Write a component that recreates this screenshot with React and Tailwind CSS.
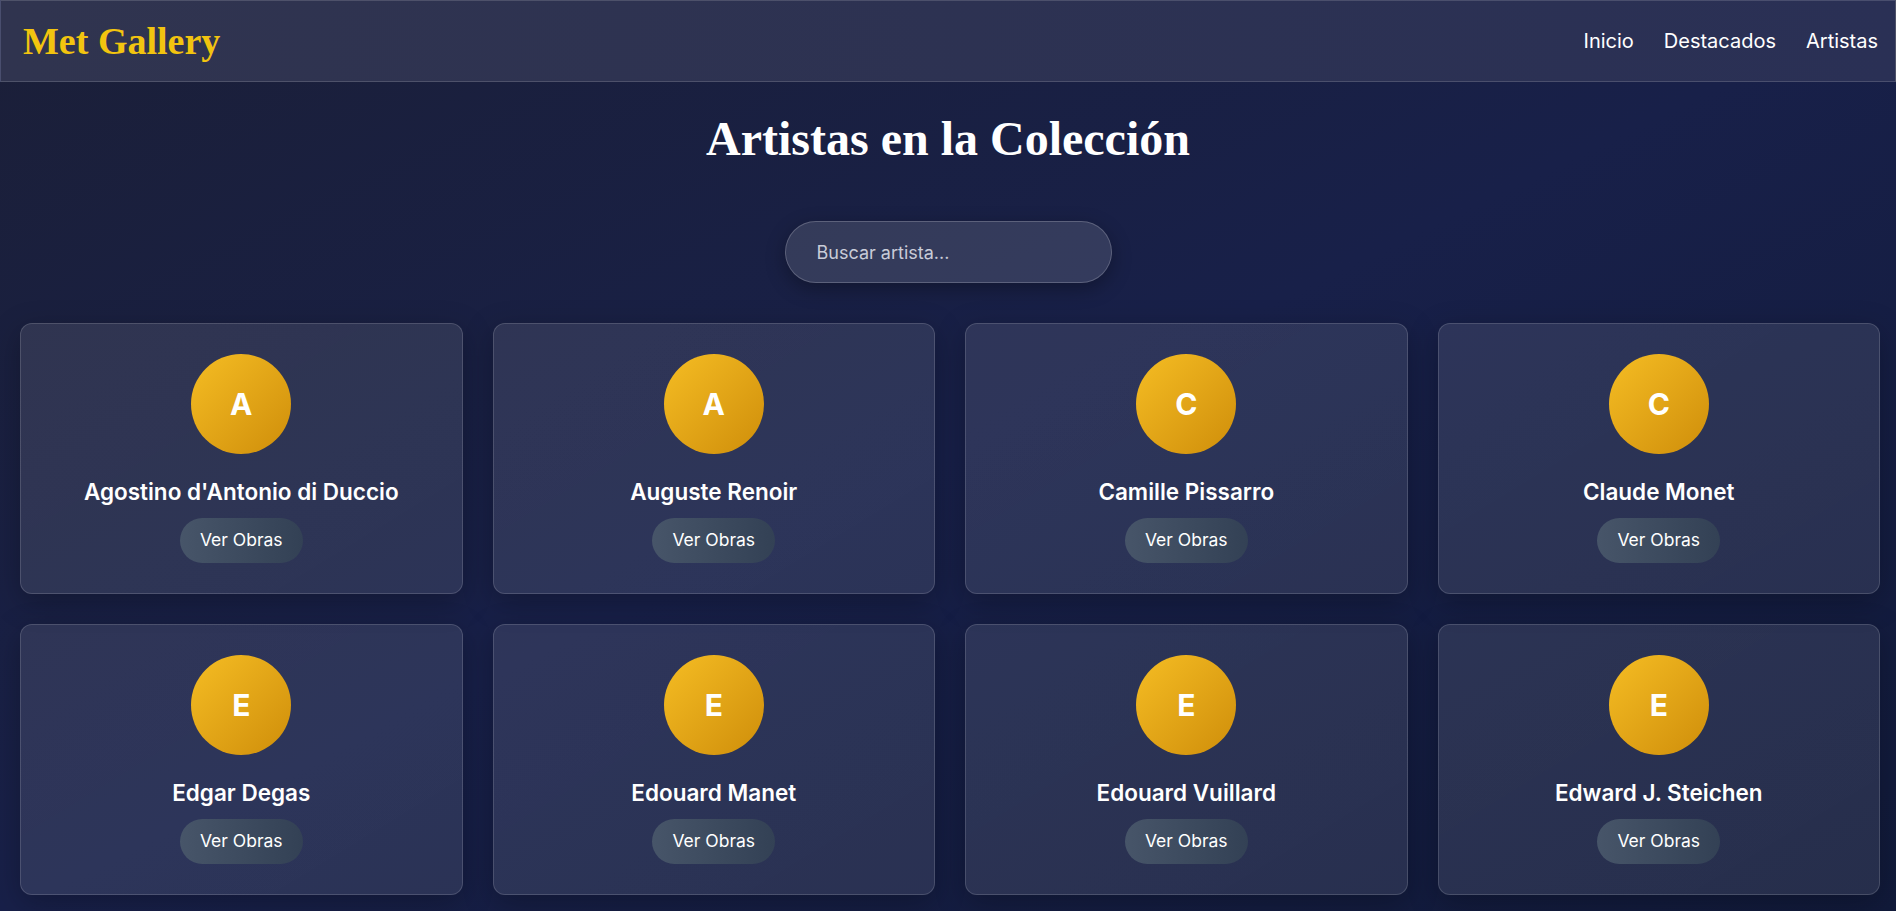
import React from 'react';

const artists = [
  "Agostino d'Antonio di Duccio",
  'Auguste Renoir',
  'Camille Pissarro',
  'Claude Monet',
  'Edgar Degas',
  'Edouard Manet',
  'Edouard Vuillard',
  'Edward J. Steichen',
];

const serif = { fontFamily: '"Liberation Serif", "DejaVu Serif", serif' };

const ArtistCard = ({ name }) => (
  <div className="flex flex-col items-center rounded-xl border border-white/15 bg-gradient-to-br from-white/[0.1] to-white/[0.09] pt-[30px] pb-[30px] shadow-[0_8px_30px_rgba(0,0,0,0.25)]">
    <div className="w-[100px] h-[100px] rounded-full bg-gradient-to-br from-[#f5bd23] to-[#cf8e09] flex items-center justify-center text-white text-[30px] font-bold">
      {name[0]}
    </div>
    <h3 className="mt-[21px] text-[22.5px] leading-[33px] font-semibold text-white">{name}</h3>
    <button className="mt-[10px] h-[45px] px-5 rounded-full bg-gradient-to-r from-[#475569] to-[#334155] text-white text-[17.5px]">
      Ver Obras
    </button>
  </div>
);

const App = () => {
  return (
    <div
      className="min-h-screen w-full bg-gradient-to-br from-[#1b1f38] via-[#182049] to-[#111a3a] text-white"
      style={{ fontFamily: 'Inter, "Liberation Sans", sans-serif' }}
    >
      <header className="h-[82px] flex items-center justify-between pl-[22px] pr-[17px] border border-white/15 bg-gradient-to-r from-[#30344f] to-[#2a3055]">
        <h1 className="text-[38px] font-bold text-[#f2c40f]" style={serif}>
          Met Gallery
        </h1>
        <nav className="flex gap-[30px] text-[20px] text-white">
          <a href="#">Inicio</a>
          <a href="#">Destacados</a>
          <a href="#">Artistas</a>
        </nav>
      </header>

      <h2 className="mt-[33px] text-center text-[48px] leading-none font-bold text-white" style={serif}>
        Artistas en la Colección
      </h2>

      <div className="mt-[58px] flex justify-center">
        <input
          type="text"
          placeholder="Buscar artista..."
          className="w-[327px] h-[62px] rounded-full border border-white/20 bg-white/[0.12] px-[31px] text-lg text-white placeholder:text-[#c9ccd8] outline-none shadow-[0_6px_20px_rgba(0,0,0,0.3)]"
        />
      </div>

      <div className="mt-10 grid grid-cols-4 gap-[30px] pl-5 pr-4 pb-4">
        {artists.map((a) => (
          <ArtistCard key={a} name={a} />
        ))}
      </div>
    </div>
  );
};

export default App;
